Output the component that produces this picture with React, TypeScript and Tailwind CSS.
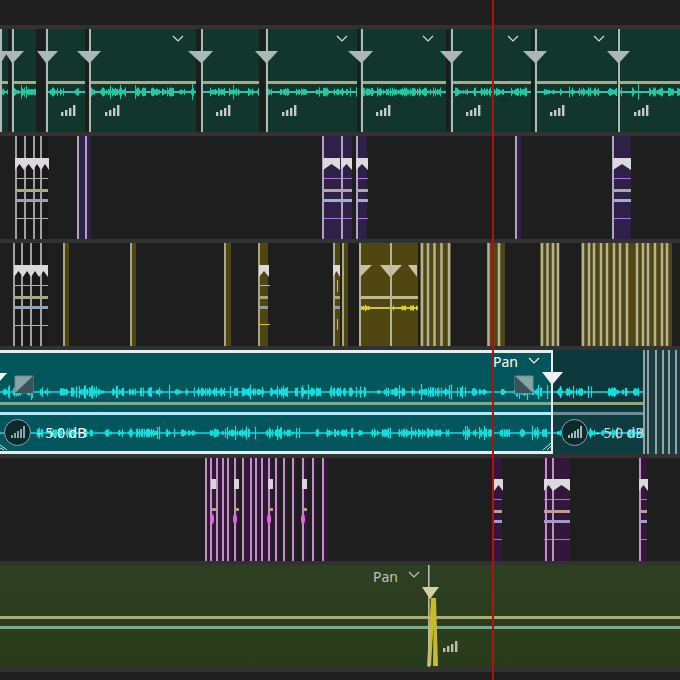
import React from "react";

type Seg = [number, number];
const rng = (seed: number) => {
  let s = seed;
  return () => {
    s = (s * 9301 + 49297) % 233280;
    return s / 233280;
  };
};

function wavePath(x0: number, x1: number, cy: number, amp: number, seed: number, spike = 0.03, burstRate = 0.16) {
  const r = rng(seed);
  let d = "";
  let burst = 0;
  for (let x = x0; x < x1; x += 1) {
    if (burst <= 0 && r() < burstRate) burst = 2 + Math.floor(r() * 7);
    let h = burst > 0 ? 1.2 + r() * amp * 0.7 : 0.8;
    if (r() < spike) h = amp * (0.9 + r() * 0.7);
    burst -= 1;
    d += `M${x + 0.5} ${(cy - h).toFixed(1)}V${(cy + h).toFixed(1)}`;
  }
  return d;
}

function Lane({ x0, x1, y, h = 3, color }: { x0: number; x1: number; y: number; h?: number; color: string }) {
  return <rect x={x0} y={y} width={x1 - x0} height={h} fill={color} />;
}

function Down({ x, y, l, r, color }: { x: number; y: number; l: number; r: number; color: string }) {
  return (
    <g fill={color}>
      {l > 0 && <polygon points={`${x - l},${y} ${x - 1},${y} ${x - 1},${y + 12}`} />}
      {r > 0 && <polygon points={`${x},${y} ${x + r},${y} ${x},${y + 12}`} />}
    </g>
  );
}

function Flag({ x, w, y, color = "#dcd9dc" }: { x: number; w: number; y: number; color?: string }) {
  return <polygon fill={color} points={`${x},${y} ${x + w},${y} ${x + w},${y + 12} ${x + w / 2},${y + 6} ${x},${y + 12}`} />;
}

function Levels({ x, y, color = "#c2cbc6" }: { x: number; y: number; color?: string }) {
  return (
    <g fill={color}>
      <rect x={x} y={y + 7} width={2.4} height={4} />
      <rect x={x + 4} y={y + 5} width={2.4} height={6} />
      <rect x={x + 8} y={y + 3} width={2.4} height={8} />
      <rect x={x + 12} y={y} width={2.4} height={11} />
    </g>
  );
}

function Chevron({ x, y, color = "#d5dcd8" }: { x: number; y: number; color?: string }) {
  return <path d={`M${x - 5} ${y - 3}L${x} ${y + 2}L${x + 5} ${y - 3}`} fill="none" stroke={color} strokeWidth={1.2} />;
}

function Sep({ h }: { h: string }) {
  return <div className={`${h} bg-[#323232]`} />;
}

function Track({ h, bg, children }: { h: string; bg: string; children: React.ReactNode }) {
  return (
    <div className={`relative overflow-hidden ${h} ${bg}`}>
      <svg className="absolute inset-0 h-full w-full blur-[0.5px]" viewBox="0 0 680 104" preserveAspectRatio="xMinYMin slice">
        {children}
      </svg>
    </div>
  );
}

function Clips({ clips, bg }: { clips: Seg[]; bg: string }) {
  return (
    <>
      {clips.map(([a, b]) => (
        <rect key={a} x={a} y={-2} width={b - a} height={108} fill={bg} />
      ))}
    </>
  );
}

function Lines({ xs, color, w = 2, h = 104 }: { xs: number[]; color: string; w?: number; h?: number }) {
  return (
    <>
      {xs.map((x) => (
        <rect key={x} x={x - w / 2} y={-2} width={w} height={h + 4} fill={color} />
      ))}
    </>
  );
}

const T1_SEGS: Seg[] = [[0, 8], [12, 36], [47, 85], [90, 196], [202, 259], [267, 357], [362, 446], [452, 531], [536, 617], [620, 680]];
const T1_GAPS: Seg[] = [[8, 11], [36, 45], [85, 89], [196, 201], [259, 265], [357, 360], [446, 450], [531, 534], [617, 618]];
const T1_LINES = [1, 13, 47, 90, 202, 267, 362, 452, 536, 619];
const T1_LEVELS = [61, 105, 216, 282, 376, 466, 550, 634];
const T1_CHEV = [178, 342, 428, 513, 599];
const T1_TRI: [number, number, number][] = [[1, 0, 7], [13, 9, 11], [47, 10, 11], [90, 13, 11], [202, 14, 11], [267, 12, 11], [362, 14, 11], [452, 12, 11], [536, 13, 11], [619, 12, 11]];

function TrackOne() {
  return (
    <Track h="h-[103px]" bg="bg-[#12362d]">
      <Clips clips={T1_GAPS} bg="#1a1f1d" />
      {T1_SEGS.map(([a, b], i) => (
        <g key={a}>
          <Lane x0={a} x1={b} y={52} color="#a8ab82" />
          <Lane x0={a} x1={b} y={62} h={2} color="#6fb3ad" />
          <path d={wavePath(a, b, 63, 5, 17 + i * 31, 0.02, 0.22)} stroke="#1fc9a4" strokeWidth={1} fill="none" />
        </g>
      ))}
      <Lines xs={T1_LINES} color="#aebab6" />
      {T1_TRI.map(([x, l, r]) => (
        <Down key={x} x={x} y={22} l={l} r={r} color="#a9b8b3" />
      ))}
      {T1_LEVELS.map((x) => (
        <Levels key={x} x={x} y={76} />
      ))}
      {T1_CHEV.map((x) => (
        <Chevron key={x} x={x} y={10} />
      ))}
    </Track>
  );
}

function Marks({ segs, thin, yellow, blue, y }: { segs: Seg[]; thin: string; yellow: string; blue: string; y: number }) {
  return (
    <>
      {segs.map(([a, b]) => (
        <g key={a}>
          <Lane x0={a} x1={b} y={y + 20} h={1} color={thin} />
          <Lane x0={a} x1={b} y={y + 31} color={yellow} />
          <Lane x0={a} x1={b} y={y + 41} color={blue} />
          <Lane x0={a} x1={b} y={y + 60} h={1} color={thin} />
        </g>
      ))}
    </>
  );
}

function TrackTwo() {
  const purple: Seg[] = [[77, 91], [323, 352], [356, 367], [515, 521], [613, 631]];
  return (
    <Track h="h-[103px]" bg="bg-[#1e1e1e]">
      <rect x={15} y={-2} width={33} height={108} fill="#191919" />
      <Clips clips={purple} bg="#2e2046" />
      <Marks segs={[[15, 48]]} thin="#b5b5b5" yellow="#aaa884" blue="#8fa4bd" y={22} />
      <Marks segs={[[323, 352], [356, 368], [613, 631]]} thin="#a878dc" yellow="#b3a98c" blue="#9cb0cf" y={22} />
      <Lines xs={[16, 25, 34, 41]} color="#a0a0a0" />
      <Lines xs={[78, 86, 323, 342, 357, 516, 613]} color="#b0a3c0" />
      <Flag x={15} w={9} y={22} />
      <Flag x={24} w={9} y={22} />
      <Flag x={33} w={8} y={22} />
      <Flag x={41} w={8} y={22} />
      <Flag x={323} w={17} y={22} />
      <Flag x={341} w={11} y={22} />
      <Flag x={356} w={12} y={22} />
      <Flag x={613} w={18} y={22} />
    </Track>
  );
}

function TrackThree() {
  const olive: Seg[] = [[63, 69], [130, 136], [224, 231], [258, 268], [333, 340], [342, 348], [360, 418], [420, 451], [487, 505], [540, 559], [581, 672]];
  const stripes = [422, 428, 434.5, 441.5, 449, 488.5, 499, 542, 547.5, 553, 558, 583, 589, 594, 601, 607, 614, 620, 627, 637, 643, 648, 655, 662, 667];
  return (
    <Track h="h-[103px]" bg="bg-[#1e1e1e]">
      <rect x={14} y={-2} width={33} height={108} fill="#191919" />
      <Clips clips={olive} bg="#4f4612" />
      <Marks segs={[[14, 48]]} thin="#b5b5b5" yellow="#aaa884" blue="#8fa4bd" y={22} />
      <Lane x0={258} x1={268} y={53} color="#a8a57a" />
      <Lane x0={258} x1={268} y={63} color="#8c9ca5" />
      <Lane x0={258} x1={270} y={42} h={1} color="#d8c324" />
      <Lane x0={258} x1={270} y={81} h={1} color="#d8c324" />
      <Lane x0={333} x1={340} y={53} color="#a8a57a" />
      <Lane x0={333} x1={340} y={63} color="#8c9ca5" />
      <path d="M337.5 37V49M337.5 76V87" stroke="#d8c324" fill="none" />
      <Lane x0={360} x1={418} y={53} color="#bdb98c" />
      <Lane x0={360} x1={418} y={64} h={2} color="#8a9a95" />
      <path d={wavePath(360, 418, 65, 2, 71, 0.08)} stroke="#e0d128" fill="none" />
      <Lines xs={[14, 22, 31, 41]} color="#a0a0a0" />
      <Lines xs={[64, 131, 225, 259, 334, 343]} color="#a8a58a" />
      <Lines xs={[360, 391]} color="#b5b19a" />
      <Lines xs={stripes} w={2.5} color="#b3b196" />
      <Flag x={14} w={9} y={22} />
      <Flag x={23} w={8} y={22} />
      <Flag x={31} w={8} y={22} />
      <Flag x={39} w={9} y={22} />
      <Flag x={259} w={10} y={22} />
      <Flag x={333} w={7} y={22} />
      <Down x={360} y={22} l={0} r={12} color="#c6c1a2" />
      <Down x={391} y={22} l={11} r={11} color="#c6c1a2" />
      <Down x={418} y={22} l={10} r={0} color="#c6c1a2" />
    </Track>
  );
}

function Badge({ cls, color }: { cls: string; color: string }) {
  const heights = [3, 5, 7, 9, 12];
  return (
    <div className={`absolute top-[69px] flex h-[27px] w-[27px] items-end justify-center gap-px rounded-full border-[1.5px] border-[#8fa5a8] bg-[#0a2a2e] pb-[7px] ${cls}`}>
      {heights.map((h) => (
        <svg key={h} width="2" height={h} className="block">
          <rect width="2" height={h} fill={color} />
        </svg>
      ))}
    </div>
  );
}

function DbLabel({ cls }: { cls: string }) {
  return (
    <span className={`absolute top-[73px] whitespace-nowrap font-['Noto_Sans',sans-serif] text-[14px] leading-[20px] ${cls}`}>
      - 5.0 dB
    </span>
  );
}

function TrackFour() {
  return (
    <div className="relative h-[104px] overflow-hidden bg-[#0f3c40]">
      <svg className="absolute inset-0 h-full w-full blur-[0.5px]" viewBox="0 0 680 104">
        <rect x={-2} y={-2} width={555} height={108} fill="#03565c" />
        <rect x={553} y={-2} width={91} height={62} fill="#0c383c" />
        <rect x={644} y={-2} width={36} height={108} fill="#1b3c40" />
        <path d={wavePath(0, 644, 42, 5, 211, 0.07, 0.18)} stroke="#14dcdc" strokeWidth={1.2} fill="none" />
        <path d={wavePath(0, 644, 83, 4.5, 377, 0.07, 0.18)} stroke="#14dcdc" strokeWidth={1.2} fill="none" />
        <Lane x0={-2} x1={553} y={52} color="#7fa892" />
        <Lane x0={553} x1={644} y={52} color="#96a57e" />
        <Lane x0={-2} x1={553} y={62} color="#b5e9f6" />
        <Lane x0={553} x1={644} y={62} color="#6a8c92" />
        <Lines xs={[644, 648, 656, 663, 669, 676]} color="#93a5a7" />
        <polygon points="15,26 33,26 33,43 15,43" fill="#86a3a6" stroke="#6d8c90" />
        <polygon points="33,26 33,43 15,43" fill="#3c5158" />
        <polygon points="515,26 533,26 533,43 515,43" fill="#86a3a6" stroke="#6d8c90" />
        <polygon points="515,26 533,43 515,43" fill="#3c5158" />
        <polygon points="-2,23 7,23 0,31" fill="#f5f5f5" />
        <polygon points="542,22 563,22 552,35" fill="#eef2f2" />
        <Chevron x={534} y={11} color="#ffffff" />
        <path d="M0 95L7 100M0 98L4 100M551 93L543 100M551 96L547 100" stroke="#cfe6e6" fill="none" />
      </svg>
      <div className="absolute inset-y-0 left-0 w-[553px] border-y-[3px] border-r-[2px] border-[#e6eeee]" />
      <Badge cls="left-[4px]" color="#8fa5a8" />
      <Badge cls="left-[561px]" color="#a5b5b7" />
      <DbLabel cls="left-[37px] text-white" />
      <DbLabel cls="left-[595px] text-[#cdd6d6]" />
      <span className="absolute left-[493px] top-[2px] font-['Noto_Sans',sans-serif] text-[14px] leading-[20px] text-white">Pan</span>
    </div>
  );
}

function TrackFive() {
  const stripes = [206, 211, 217, 223, 228, 235, 243, 251, 256, 262, 269, 276, 284, 293, 303, 313, 323];
  const clips: Seg[] = [[206, 232], [234, 238], [242, 272], [274, 279], [283, 287], [292, 296], [301, 307], [312, 316], [322, 328], [494, 502], [544, 570], [639, 647]];
  return (
    <Track h="h-[103px]" bg="bg-[#1e1e1e]">
      <Clips clips={clips} bg="#35153c" />
      <Marks segs={[[494, 502], [544, 570], [639, 647]]} thin="#d45cd4" yellow="#b3a294" blue="#9c9cc8" y={21} />
      <Lines xs={stripes} color="#b898ba" />
      <Lines xs={[546, 553, 640]} color="#b898ba" />
      {[212, 235, 269, 303].map((x) => (
        <g key={x}>
          <rect x={x - 1} y={21} width={5} height={10} fill="#d9d6d9" />
          <rect x={x - 1} y={50} width={5} height={3} fill="#b39c8c" />
          <ellipse cx={x} cy={61} rx={2} ry={5} fill="#e565e5" />
        </g>
      ))}
      <Flag x={494} w={9} y={21} />
      <Flag x={544} w={9} y={21} />
      <Flag x={553} w={17} y={21} />
      <Flag x={639} w={9} y={21} />
    </Track>
  );
}

function TrackSix() {
  return (
    <div className="relative h-[102px] overflow-hidden bg-gradient-to-b from-[#2e3f22] to-[#293c1a]">
      <svg className="absolute inset-0 h-full w-full blur-[0.5px]" viewBox="0 0 680 102">
        <Lane x0={-2} x1={682} y={51} color="#a8ad78" />
        <Lane x0={-2} x1={682} y={61} color="#7da98f" />
        <polygon points="431,33 436,33 438,101 433,101 433.5,60 431,101 427,101" fill="#c9b92e" />
        <rect x={428} y={0} width={1.6} height={102} fill="#b8bba6" />
        <polygon points="422,22 439,22 430,34" fill="#d8d2a0" />
        <Levels x={443} y={76} color="#b9c2a8" />
        <Chevron x={414} y={10} color="#c0c5b5" />
      </svg>
      <span className="absolute left-[373px] top-[2px] font-['Noto_Sans',sans-serif] text-[14px] leading-[20px] text-[#c0c5b5]">Pan</span>
    </div>
  );
}

export default function App() {
  return (
    <div className="relative flex h-[680px] w-[680px] flex-col overflow-hidden bg-[#1e1e1e]">
      <div className="h-[25px]" />
      <Sep h="h-[4px]" />
      <TrackOne />
      <Sep h="h-[4px]" />
      <TrackTwo />
      <Sep h="h-[4px]" />
      <TrackThree />
      <Sep h="h-[4px]" />
      <TrackFour />
      <Sep h="h-[4px]" />
      <TrackFive />
      <Sep h="h-[4px]" />
      <TrackSix />
      <Sep h="h-[5px]" />
      <div className="flex-1 bg-[#1e1e1e]" />
      <div className="absolute inset-y-0 left-[492px] z-10 w-[2px] bg-[#b01212]" />
    </div>
  );
}
